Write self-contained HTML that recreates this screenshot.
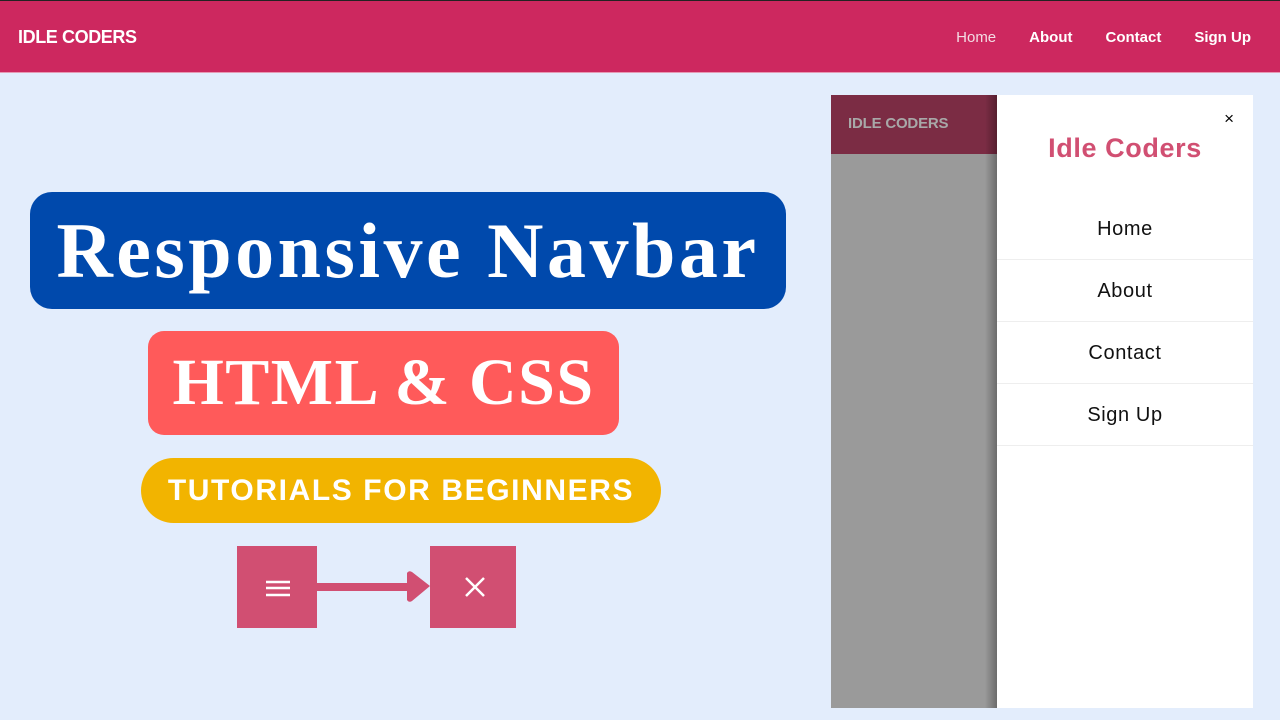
<!DOCTYPE html>
<html><head><style>
*{margin:0;padding:0;box-sizing:border-box}
body{width:1280px;height:720px;background:#E3EDFC;font-family:"Liberation Sans",sans-serif;position:relative;overflow:hidden}
.nav{position:absolute;left:0;top:0;width:1280px;height:73px;background:#CD285F;border-top:1px solid #222;border-bottom:1px solid #e69ab4}
.nav .logo{position:absolute;left:18px;top:26px;color:#fff;font-weight:bold;font-size:18px;letter-spacing:-0.4px}
.nav .links{position:absolute;right:29px;top:28px;color:#fff;font-size:15px;font-weight:bold;letter-spacing:0px}
.nav .links span{margin-left:33px}
.abs{position:absolute}
.box{position:absolute;color:#fff;display:flex;align-items:center;justify-content:center}
</style></head><body>
<div class="nav"><div class="logo">IDLE CODERS</div>
<div class="links"><span style="font-weight:normal;color:#f3dbe3">Home</span><span>About</span><span>Contact</span><span>Sign Up</span></div></div>

<div class="box" style="left:30px;top:192px;width:756px;height:117px;background:#0049AC;border-radius:22px;font-family:'Liberation Serif',serif;font-weight:bold;font-size:78px;letter-spacing:3.5px">Responsive Navbar</div>
<div class="box" style="left:148px;top:331px;width:471px;height:104px;background:#FF5A5A;border-radius:16px;font-family:'Liberation Serif',serif;font-weight:bold;font-size:66px;letter-spacing:1.5px">HTML &amp; CSS</div>
<div class="box" style="left:141px;top:458px;width:520px;height:65px;background:#F2B400;border-radius:33px;font-weight:bold;font-size:30px;letter-spacing:1.6px">TUTORIALS FOR BEGINNERS</div>

<div class="abs" style="left:237px;top:546px;width:80px;height:82px;background:#D14F72"></div>
<div class="abs" style="left:430px;top:546px;width:86px;height:82px;background:#D14F72"></div>
<svg class="abs" style="left:230px;top:540px" width="300" height="100">
<g stroke="#fff" stroke-width="2.5"><line x1="36" y1="42" x2="60" y2="42"/><line x1="36" y1="48" x2="60" y2="48"/><line x1="36" y1="55" x2="60" y2="55"/>
<line x1="236" y1="38" x2="254" y2="56"/><line x1="254" y1="38" x2="236" y2="56"/></g>
<rect x="87" y="43" width="92" height="8" fill="#D14F72"/>
<path d="M177 33 Q179 30 182 32 L200 46 L182 61 Q179 63 177 60 Z" fill="#D14F72"/>
</svg>

<div class="abs" style="left:831px;top:95px;width:166px;height:613px;background:#9a9a9a"></div>
<div class="abs" style="left:831px;top:95px;width:166px;height:59px;background:#7B2C44;color:#a8a8a8;font-weight:bold;font-size:15px;padding:20px 0 0 17px;letter-spacing:-0.2px">IDLE CODERS</div>
<div class="abs" style="left:985px;top:95px;width:12px;height:613px;background:linear-gradient(to right,rgba(0,0,0,0),rgba(0,0,0,0.3))"></div>
<div class="abs" style="left:997px;top:95px;width:256px;height:613px;background:#fff">
<div class="abs" style="right:19px;top:14px;font-size:17px;color:#000">×</div>
<div class="abs" style="left:0;width:256px;top:38px;text-align:center;color:#D14F72;font-weight:bold;font-size:27px;letter-spacing:0.6px">Idle Coders</div>
<div class="abs" style="left:0;top:103px;width:256px;font-size:20px;color:#111;text-align:center;letter-spacing:0.6px">
<div style="height:62px;line-height:62px;border-bottom:1px solid #eee">Home</div>
<div style="height:62px;line-height:62px;border-bottom:1px solid #eee">About</div>
<div style="height:62px;line-height:62px;border-bottom:1px solid #eee">Contact</div>
<div style="height:62px;line-height:62px;border-bottom:1px solid #eee">Sign Up</div>
</div></div>
</body></html>
